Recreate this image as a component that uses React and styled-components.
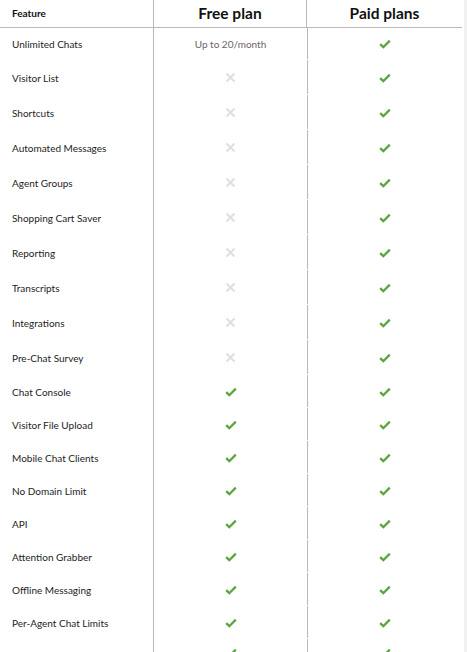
import React from "react";
import styled, { createGlobalStyle } from "styled-components";

const GlobalStyle = createGlobalStyle`
  html, body { margin: 0; padding: 0; }
  body {
    background: #f0f0f0;
    font-family: Lato, "Open Sans", sans-serif;
    color: #1d1d1d;
    overflow: hidden;
  }
`;

const LINE = "#bdb5b8";

const Table = styled.div`
  width: 463px;
  height: 652px;
  background: #fff;
  display: grid;
  grid-template-columns: 154px 153px 155px;
  grid-auto-rows: min-content;
  align-content: start;
  border-right: 1px solid #fff;
  overflow: hidden;
`;

const Head = styled.div`
  height: 28px;
  border-bottom: 1px solid ${LINE};
  display: flex;
  align-items: center;
  justify-content: ${(p) => (p.$left ? "flex-start" : "center")};
  padding-left: ${(p) => (p.$left ? "12px" : "0")};
  padding-bottom: 2px;
  box-sizing: border-box;
  font-weight: 700;
  font-size: ${(p) => (p.$left ? "10px" : "15.5px")};
  color: #111;
  border-right: ${(p) => (p.$last ? "none" : `1px solid ${LINE}`)};
`;

const Cell = styled.div`
  height: ${(p) => p.$h}px;
  box-sizing: border-box;
  display: flex;
  align-items: ${(p) => (p.$top ? "flex-start" : "center")};
  padding-top: ${(p) => (p.$top ? "9px" : "0")};
  justify-content: ${(p) => (p.$left ? "flex-start" : "center")};
  padding-left: ${(p) => (p.$left ? "12px" : "0")};
  font-size: 10px;
  color: #1d1d1d;
  border-right: ${(p) => (p.$left ? `1px solid ${LINE}` : "none")};
  background-image: ${(p) =>
    p.$gapline ? `linear-gradient(${LINE}, ${LINE})` : "none"};
  background-repeat: no-repeat;
  background-position: 0 0;
  background-size: 1px calc(100% - 1px);
`;

const Note = styled.span`
  color: #6a6567;
  font-size: 10px;
`;

const Check = () => (
  <svg width="12" height="10" viewBox="0 0 12 10">
    <path d="M1.2 5.2 L4.3 8.2 L10.8 1.6" fill="none" stroke="#5aa53d" strokeWidth="2.3" />
  </svg>
);

const Cross = () => (
  <svg width="11" height="11" viewBox="0 0 11 11">
    <path d="M1.5 1.5 L9.5 9.5 M9.5 1.5 L1.5 9.5" fill="none" stroke="#e4dcde" strokeWidth="2" />
  </svg>
);

const rows = [
  ["Unlimited Chats", "note", 32],
  ["Visitor List", "x", 35],
  ["Shortcuts", "x", 35],
  ["Automated Messages", "x", 35],
  ["Agent Groups", "x", 35],
  ["Shopping Cart Saver", "x", 35],
  ["Reporting", "x", 35],
  ["Transcripts", "x", 35],
  ["Integrations", "x", 35],
  ["Pre-Chat Survey", "x", 35],
  ["Chat Console", "y", 33],
  ["Visitor File Upload", "y", 33],
  ["Mobile Chat Clients", "y", 33],
  ["No Domain Limit", "y", 33],
  ["API", "y", 33],
  ["Attention Grabber", "y", 33],
  ["Offline Messaging", "y", 33],
  ["Per-Agent Chat Limits", "y", 33],
  ["", "y", 33, true],
];

export default function App() {
  return (
    <>
      <GlobalStyle />
      <Table>
        <Head $left>Feature</Head>
        <Head>Free plan</Head>
        <Head $last>Paid plans</Head>
        {rows.map(([name, free, h, top], i) => (
          <React.Fragment key={i}>
            <Cell $left $h={h}>{name}</Cell>
            <Cell $h={h} $top={top}>
              {free === "note" ? <Note>Up to 20/month</Note> : free === "x" ? <Cross /> : <Check />}
            </Cell>
            <Cell $h={h} $top={top} $gapline>
              <Check />
            </Cell>
          </React.Fragment>
        ))}
      </Table>
    </>
  );
}
